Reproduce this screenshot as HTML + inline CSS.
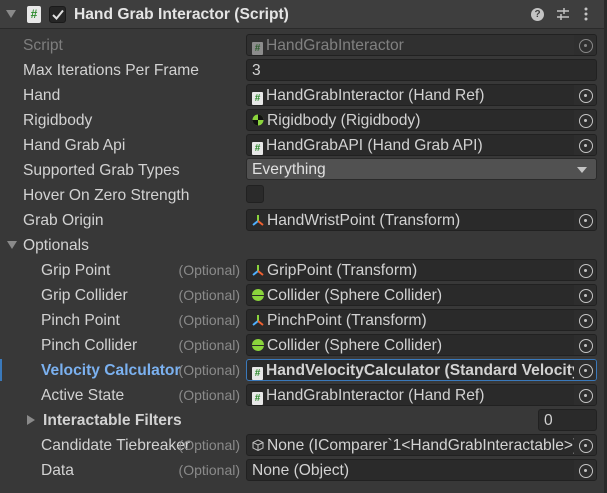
<!DOCTYPE html>
<html><head><meta charset="utf-8"><style>
*{box-sizing:border-box;margin:0;padding:0}
body{width:607px;height:493px;background:#383838;font-family:"Liberation Sans",sans-serif;font-size:15.6px;color:#d2d2d2;position:relative;overflow:hidden}
.hdr{position:absolute;left:0;top:0;width:604px;height:29px;background:#3e3e3e;border-bottom:1px solid #2a2a2a}
.sb{position:absolute;right:0;top:0;width:3px;height:493px;background:#2a2a2a}
.a{position:absolute;white-space:nowrap;line-height:20px}
.l{position:absolute;white-space:nowrap;height:20px;line-height:20px}
.o{position:absolute;width:90px;text-align:right;left:150px;color:#8a8a8a;font-size:14px;line-height:19px}
.f{position:absolute;left:246px;width:351px;height:22px;background:#2a2a2a;border:1px solid #212121;border-radius:3px;line-height:21px;padding-left:5px;white-space:nowrap;overflow:hidden;color:#d2d2d2}
.f .b{position:absolute;right:0;top:0;width:22px;height:20px;background:#2d2d2d}
.f .b:after{content:"";position:absolute;left:5px;top:4px;width:12px;height:12px;border:1.5px solid #c4c4c4;border-radius:50%}
.f .b:before{content:"";position:absolute;left:9.5px;top:8.5px;width:3px;height:3px;background:#c4c4c4;border-radius:50%;z-index:1}
.s{display:inline-block;width:11px;height:13px;background:#e8e8e8;border-radius:1px;vertical-align:-1px;margin-right:3px;color:#2c8a2c;font-size:10px;line-height:13px;text-align:center;font-weight:bold}
.c{display:inline-block;width:12px;height:12px;border-radius:50%;background:#8bd43c;vertical-align:-1px;margin-right:3px;position:relative}
.c:after{content:"";position:absolute;left:0;top:5.5px;width:12px;height:1px;background:#2a2a2a}
svg{vertical-align:-1px;margin-right:3px}
</style></head><body>
<div class="hdr"></div>
<div class="sb"></div>
<svg style="position:absolute;left:6px;top:10px" width="10" height="8"><polygon points="0,0 10,0 5,8" fill="#8a8a8a"/></svg>
<div style="position:absolute;left:27px;top:6px;width:14px;height:17px;background:#e8e8e8;border-radius:2px;color:#2c8a2c;font-weight:bold;font-size:12px;text-align:center;line-height:17px">#</div>
<div style="position:absolute;left:49px;top:6px;width:17px;height:17px;background:#262626;border:1px solid #1a1a1a;border-radius:3px"></div>
<svg style="position:absolute;left:52px;top:9px" width="12" height="11"><polyline points="1,6 4.5,9.5 11,1.5" fill="none" stroke="#e0e0e0" stroke-width="2"/></svg>
<div class="a" style="left:74px;top:5px;font-weight:bold;font-size:15.6px;color:#e4e4e4">Hand Grab Interactor (Script)</div>
<div style="position:absolute;left:531px;top:8px;width:13px;height:13px;border-radius:50%;background:#c4c4c4;color:#3e3e3e;font-size:10px;font-weight:bold;text-align:center;line-height:13px">?</div>
<svg style="position:absolute;left:556px;top:7px" width="14" height="14"><path d="M1 4H13M1 10H13M8 1V7M5 7V13" stroke="#c4c4c4" stroke-width="1.5"/></svg>
<svg style="position:absolute;left:584px;top:7px" width="4" height="14"><circle cx="2" cy="2" r="1.5" fill="#c4c4c4"/><circle cx="2" cy="7" r="1.5" fill="#c4c4c4"/><circle cx="2" cy="12" r="1.5" fill="#c4c4c4"/></svg>

<div class="l" style="left:23px;top:36px;color:#7e7e7e">Script</div>
<div class="f" style="top:34px;background:#303030;color:#808080"><span class="s" style="opacity:.5">#</span>HandGrabInteractor<span class="b" style="opacity:.6"></span></div>
<div class="l" style="left:23px;top:61px">Max Iterations Per Frame</div>
<div class="f" style="top:59px">3</div>
<div class="l" style="left:23px;top:86px">Hand</div>
<div class="f" style="top:84px"><span class="s">#</span>HandGrabInteractor (Hand Ref)<span class="b"></span></div>
<div class="l" style="left:23px;top:111px">Rigidbody</div>
<div class="f" style="top:109px"><svg width="12" height="12"><circle cx="6" cy="6" r="5.5" fill="#8bd43c"/><path d="M6 0.5A5.5 5.5 0 0 1 11.5 6H6ZM6 6V11.5A5.5 5.5 0 0 1 0.5 6Z" fill="#111"/></svg>Rigidbody (Rigidbody)<span class="b"></span></div>
<div class="l" style="left:23px;top:136px">Hand Grab Api</div>
<div class="f" style="top:134px"><span class="s">#</span>HandGrabAPI (Hand Grab API)<span class="b"></span></div>
<div class="l" style="left:23px;top:161px">Supported Grab Types</div>
<div class="f" style="top:158px;background:#515151;border-color:#2a2a2a;color:#e0e0e0;height:22px">Everything<svg style="position:absolute;right:6px;top:8px" width="10" height="6"><polygon points="0,0 10,0 5,6" fill="#c4c4c4"/></svg></div>
<div class="l" style="left:23px;top:186px">Hover On Zero Strength</div>
<div style="position:absolute;left:246px;top:185px;width:18px;height:18px;background:#2a2a2a;border:1px solid #212121;border-radius:3px"></div>
<div class="l" style="left:23px;top:211px">Grab Origin</div>
<div class="f" style="top:209px"><svg width="12" height="12"><path d="M6 1V7" stroke="#8bd43c" stroke-width="2"/><path d="M6 7L1 11" stroke="#4fb0ff" stroke-width="2"/><path d="M6 7L11 11" stroke="#f06030" stroke-width="2"/></svg>HandWristPoint (Transform)<span class="b"></span></div>
<svg style="position:absolute;left:7px;top:241px" width="10" height="8"><polygon points="0,0 10,0 5,8" fill="#8a8a8a"/></svg>
<div class="l" style="left:23px;top:236px">Optionals</div>

<div class="l" style="left:41px;top:261px">Grip Point</div><div class="o" style="top:261px">(Optional)</div>
<div class="f" style="top:259px"><svg width="12" height="12"><path d="M6 1V7" stroke="#8bd43c" stroke-width="2"/><path d="M6 7L1 11" stroke="#4fb0ff" stroke-width="2"/><path d="M6 7L11 11" stroke="#f06030" stroke-width="2"/></svg>GripPoint (Transform)<span class="b"></span></div>
<div class="l" style="left:41px;top:286px">Grip Collider</div><div class="o" style="top:286px">(Optional)</div>
<div class="f" style="top:284px"><span class="c"></span>Collider (Sphere Collider)<span class="b"></span></div>
<div class="l" style="left:41px;top:311px">Pinch Point</div><div class="o" style="top:311px">(Optional)</div>
<div class="f" style="top:309px"><svg width="12" height="12"><path d="M6 1V7" stroke="#8bd43c" stroke-width="2"/><path d="M6 7L1 11" stroke="#4fb0ff" stroke-width="2"/><path d="M6 7L11 11" stroke="#f06030" stroke-width="2"/></svg>PinchPoint (Transform)<span class="b"></span></div>
<div class="l" style="left:41px;top:336px">Pinch Collider</div><div class="o" style="top:336px">(Optional)</div>
<div class="f" style="top:334px"><span class="c"></span>Collider (Sphere Collider)<span class="b"></span></div>
<div style="position:absolute;left:0;top:359px;width:2px;height:22px;background:#3a79bb"></div>
<div class="l" style="left:41px;top:361px;color:#7bb1f0;font-weight:bold">Velocity Calculator</div><div class="o" style="top:361px">(Optional)</div>
<div class="f" style="top:359px;border-color:#3a79bb;font-weight:bold"><span class="s">#</span>HandVelocityCalculator (Standard Velocity Calculator)<span class="b"></span></div>
<div class="l" style="left:41px;top:386px">Active State</div><div class="o" style="top:386px">(Optional)</div>
<div class="f" style="top:384px"><span class="s">#</span>HandGrabInteractor (Hand Ref)<span class="b"></span></div>
<svg style="position:absolute;left:27px;top:415px" width="8" height="10"><polygon points="0,0 8,5 0,10" fill="#8a8a8a"/></svg>
<div class="l" style="left:43px;top:411px;font-weight:bold">Interactable Filters</div>
<div class="f" style="top:409px;left:538px;width:59px">0</div>
<div class="l" style="left:41px;top:436px">Candidate Tiebreaker</div><div class="o" style="top:436px">(Optional)</div>
<div class="f" style="top:434px"><svg width="12" height="12"><path d="M6 1L11 3.5V9L6 11.5L1 9V3.5ZM1 3.5L6 6L11 3.5M6 6V11.5" fill="none" stroke="#c4c4c4" stroke-width="1"/></svg>None (IComparer`1&lt;HandGrabInteractable&gt;)<span class="b"></span></div>
<div class="l" style="left:41px;top:461px">Data</div><div class="o" style="top:461px">(Optional)</div>
<div class="f" style="top:459px">None (Object)<span class="b"></span></div>
</body></html>
